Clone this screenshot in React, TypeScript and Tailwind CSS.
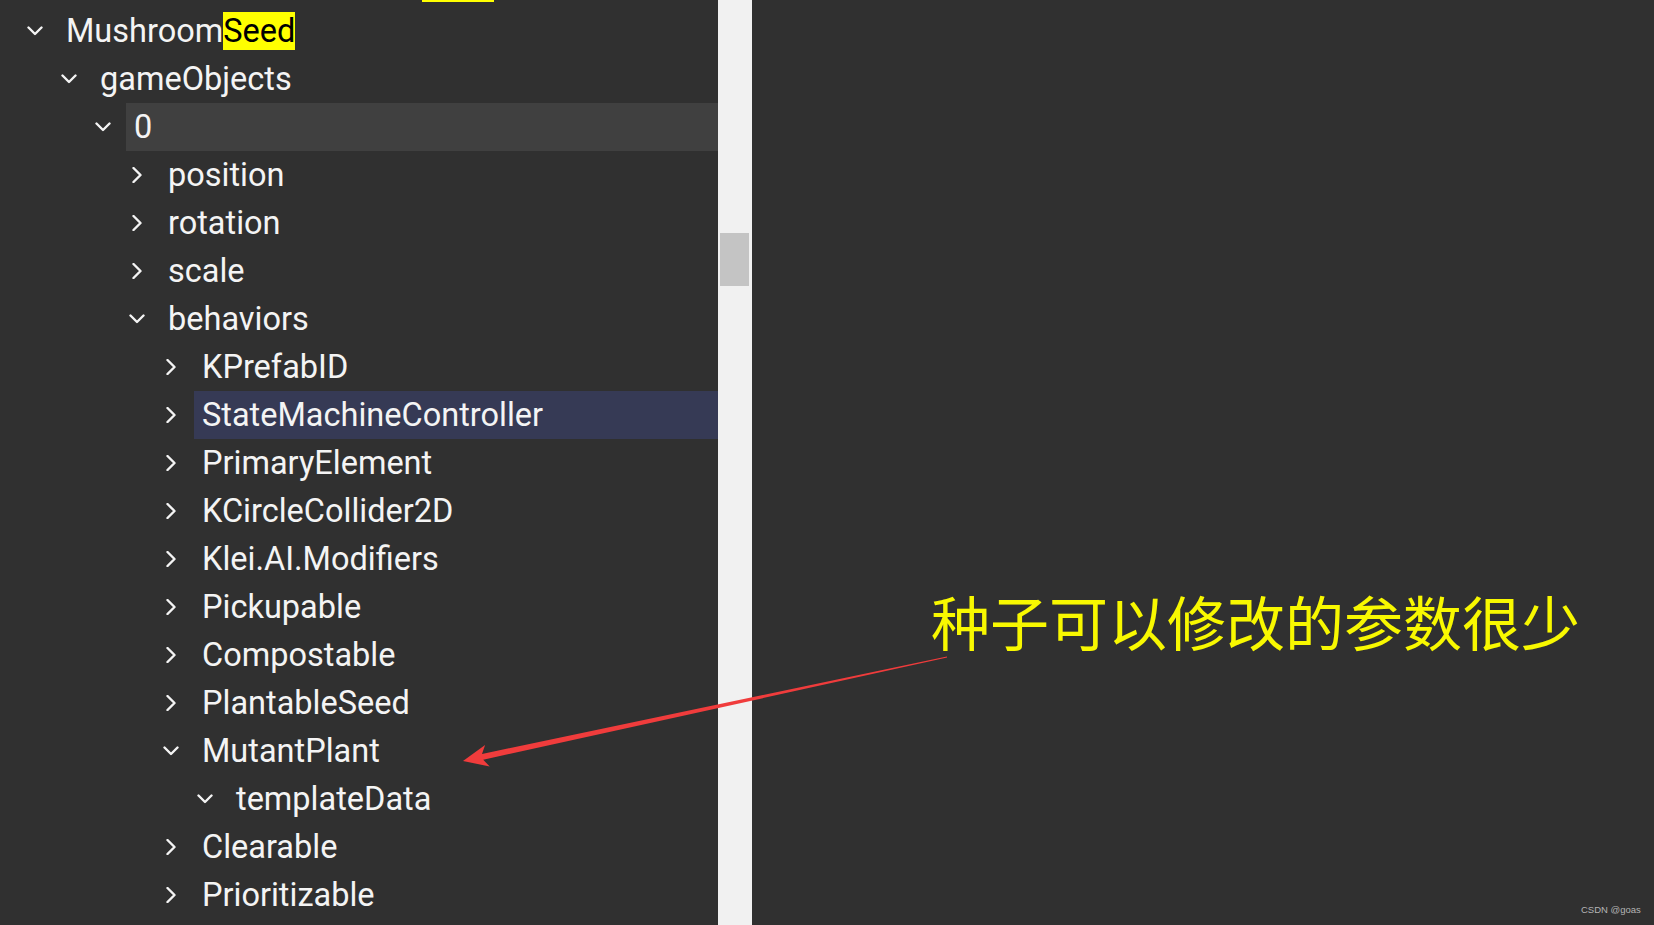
import React from "react";

type Node = {
    label: string;
    level: number;
    open: boolean;
    mark?: string;
    selected?: "gray" | "navy";
};

const rows: Node[] = [
    { label: "Mushroom", mark: "Seed", level: 0, open: true },
    { label: "gameObjects", level: 1, open: true },
    { label: "0", level: 2, open: true, selected: "gray" },
    { label: "position", level: 3, open: false },
    { label: "rotation", level: 3, open: false },
    { label: "scale", level: 3, open: false },
    { label: "behaviors", level: 3, open: true },
    { label: "KPrefabID", level: 4, open: false },
    { label: "StateMachineController", level: 4, open: false, selected: "navy" },
    { label: "PrimaryElement", level: 4, open: false },
    { label: "KCircleCollider2D", level: 4, open: false },
    { label: "Klei.AI.Modifiers", level: 4, open: false },
    { label: "Pickupable", level: 4, open: false },
    { label: "Compostable", level: 4, open: false },
    { label: "PlantableSeed", level: 4, open: false },
    { label: "MutantPlant", level: 4, open: true },
    { label: "templateData", level: 5, open: true },
    { label: "Clearable", level: 4, open: false },
    { label: "Prioritizable", level: 4, open: false },
];

const indent = ["pl-0", "pl-[34px]", "pl-[68px]", "pl-[102px]", "pl-[136px]", "pl-[170px]"];

function Chevron({ open }: { open: boolean }) {
    return (
        <svg width="16" height="16" viewBox="0 0 16 16" fill="none" stroke="#f4f4f4" strokeWidth="2.4" strokeLinecap="round" strokeLinejoin="round">
            {open ? <path d="M1.5 4.5 L8 11 L14.5 4.5" /> : <path d="M4.5 1 L11.5 8 L4.5 15" />}
        </svg>
    );
}

function Row({ node }: { node: Node }) {
    const bg =
        node.selected === "gray" ? "bg-[#404040]" : node.selected === "navy" ? "bg-[#363a55]" : "";
    return (
        <div className={`flex h-[48px] items-center ${indent[node.level]}`}>
            <div className="flex w-[58px] shrink-0 pl-[27px]">
                <Chevron open={node.open} />
            </div>
            <div className={`flex h-full flex-1 items-center pl-[8px] ${bg}`}>
                <span className="whitespace-nowrap">
                    {node.label}
                    {node.mark && <mark className="bg-[#ffff00] text-black">{node.mark}</mark>}
                </span>
            </div>
        </div>
    );
}

export default function App() {
    return (
        <div className="relative flex h-[925px] w-[1654px] overflow-hidden bg-[#303030]">
            {/* Tree panel */}
            <div className="w-[718px] shrink-0 font-['Roboto',sans-serif] text-[32.5px] text-[#f4f4f4]">
                <div className="ml-[422px] h-[2px] w-[72px] bg-[#ffff00]" />
                <div className="pt-[5px]">
                    {rows.map((r, i) => (
                        <Row key={i} node={r} />
                    ))}
                </div>
            </div>

            {/* Scrollbar */}
            <div className="w-[34px] shrink-0 bg-[#f1f1f1] pl-[2px] pt-[233px]">
                <div className="h-[53px] w-[29px] bg-[#c4c4c4]" />
            </div>

            {/* Right pane */}
            <div className="flex-1 bg-[#303030]" />

            {/* Annotation */}
            <div className="absolute left-[931px] top-[591px] whitespace-nowrap font-['Noto_Sans_CJK_SC',sans-serif] text-[59px] leading-none text-[#f8f800]">
                种子可以修改的参数很少
            </div>
            <svg className="pointer-events-none absolute left-0 top-0" width="1654" height="925">
                <polygon
                    fill="#f03c3c"
                    points="463,761 485.1,745 482,753.9 946.9,656.5 947.1,657.6 483.2,759.7 489.7,766.5"
                />
            </svg>

            <div className="absolute left-[1581px] top-[903px] font-['Liberation_Sans',sans-serif] text-[9.5px] text-[#b5b5b5]">
                CSDN @goas
            </div>
        </div>
    );
}
